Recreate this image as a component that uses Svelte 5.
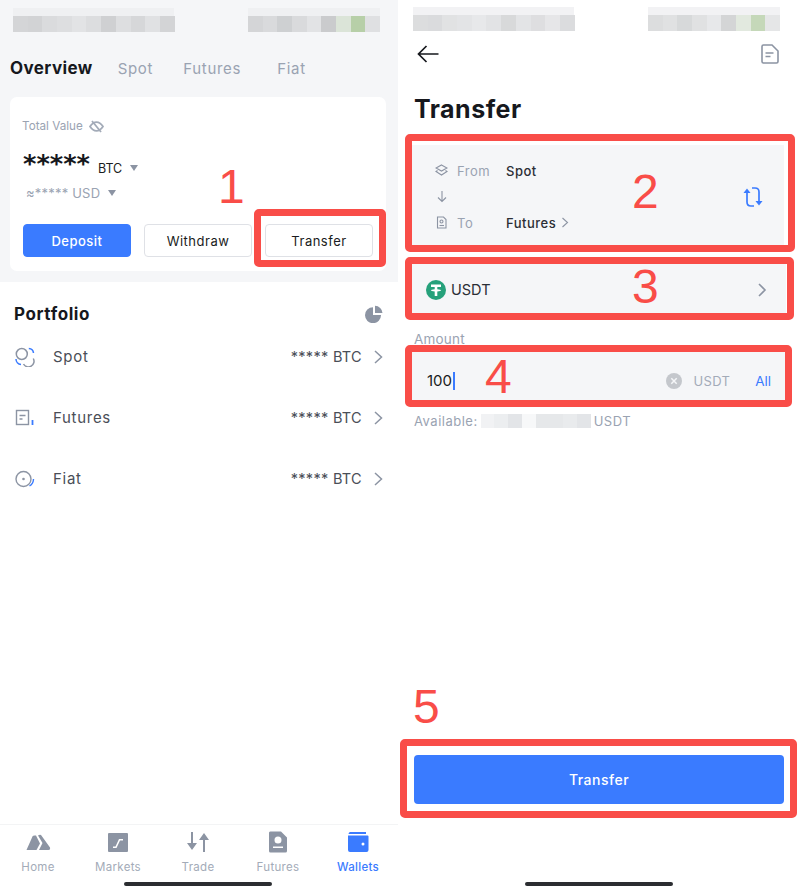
<script>
	const blurLeft = ['#d4d5d7', '#d2d3d5', '#dadbdd', '#dddee0', '#e2e3e5', '#dcdddf', '#cfd0d2', '#dddee0', '#d6d7d9', '#e0e1e3', '#d3d4d6'];
	const blurRight = ['#d4d5d7', '#d9dadc', '#ced0d2', '#d9dadc', '#e2e3e5', '#cacbcd', '#dbe4d8', '#b7cfa8', '#dfe0e2'];
	const availBlur = ['#f1f2f4', '#eceef0', '#e3e5e8', '#f7f8f9', '#e6e8ea', '#e6e8ea', '#e9ebed', '#e3e5e8'];
	const tabs = ['Home', 'Markets', 'Trade', 'Futures', 'Wallets'];
	const marks = [
		{ n: '1', x: 218, y: 163 },
		{ n: '2', x: 632, y: 168 },
		{ n: '3', x: 632, y: 263 },
		{ n: '4', x: 485, y: 353 },
		{ n: '5', x: 413, y: 683 }
	];
	const boxes = [
		{ x: 254, y: 209, w: 132, h: 58 },
		{ x: 405, y: 134, w: 390, h: 118 },
		{ x: 405, y: 257, w: 389, h: 63 },
		{ x: 405, y: 345, w: 387, h: 62 },
		{ x: 400, y: 739, w: 397, h: 79 }
	];
</script>

<div class="stage">
	<section class="phone left">
		<div class="status">
			<div class="blur">
				<div class="blur-top w161"></div>
				<div class="blur-row">{#each blurLeft as c}<i style="background:{c}"></i>{/each}</div>
			</div>
			<div class="blur">
				<div class="blur-top w132"></div>
				<div class="blur-row">{#each blurRight as c}<i style="background:{c}"></i>{/each}</div>
			</div>
		</div>

		<nav class="top-tabs">
			<span class="active">Overview</span>
			<span class="t-spot">Spot</span>
			<span class="t-fut">Futures</span>
			<span class="t-fiat">Fiat</span>
		</nav>

		<div class="card">
			<div class="total">
				Total Value
				<svg width="15" height="13" viewBox="0 0 15 13" fill="none" stroke="#a3abb8" stroke-width="1.8">
					<path d="M1 6.5C3 3.5 5 2.2 7.5 2.2S12 3.500 14 6.500C12 9.500 10 10.800 7.500 10.800S3 9.500 1 6.500Z" />
					<path d="M3 1l9 11" />
				</svg>
			</div>
			<div class="value"><b>*****</b><span>BTC</span><em class="tri dark"></em></div>
			<div class="usd">≈***** USD<em class="tri"></em></div>
			<div class="actions">
				<button class="primary">Deposit</button>
				<button>Withdraw</button>
				<button>Transfer</button>
			</div>
		</div>

		<div class="portfolio">
			<div class="pf-head">
				<h2>Portfolio</h2>
				<svg width="18" height="18" viewBox="0 0 18 18" fill="#8c94a3">
					<path d="M8 2.200A8 8 0 1 0 16 10H8Z" />
					<path d="M10 0.800A7.500 7.500 0 0 1 17.500 8H10Z" />
				</svg>
			</div>
			<div class="row">
				<svg class="ic" width="20" height="20" viewBox="0 0 20 20" fill="none" stroke-width="1.500">
					<circle cx="6.800" cy="7" r="5.500" stroke="#8c94a3" />
					<path d="M8.500 17a5.500 5.500 0 0 0 9.800-5.500" stroke="#8c94a3" />
					<path d="M13.800 1.500a5 5 0 0 1 4.700 4.500M1 12a5.500 5.500 0 0 0 5 5.500" stroke="#3a7bff" />
				</svg>
				<span class="label">Spot</span>
				<span class="amt">***** BTC</span>
				<svg class="chev" width="10" height="14" viewBox="0 0 10 14" fill="none" stroke="#8c94a3" stroke-width="1.500"><path d="M2 1l6.500 6L2 13" /></svg>
			</div>
			<div class="row">
				<svg class="ic" width="20" height="20" viewBox="0 0 20 20" fill="none" stroke-width="1.400">
					<rect x="1.500" y="2.500" width="12" height="14" stroke="#8c94a3" />
					<path d="M4.500 7.500h6M4.500 11h3" stroke="#8c94a3" />
					<path d="M17.500 12v5" stroke="#3a7bff" stroke-width="1.800" />
				</svg>
				<span class="label">Futures</span>
				<span class="amt">***** BTC</span>
				<svg class="chev" width="10" height="14" viewBox="0 0 10 14" fill="none" stroke="#8c94a3" stroke-width="1.500"><path d="M2 1l6.500 6L2 13" /></svg>
			</div>
			<div class="row">
				<svg class="ic" width="20" height="20" viewBox="0 0 20 20" fill="none" stroke-width="1.400">
					<circle cx="8.500" cy="10" r="7.500" stroke="#8c94a3" />
					<circle cx="8.500" cy="10" r="1.300" fill="#8c94a3" stroke="none" />
					<path d="M18.500 10a8 8 0 0 1-4 7" stroke="#3a7bff" />
				</svg>
				<span class="label">Fiat</span>
				<span class="amt">***** BTC</span>
				<svg class="chev" width="10" height="14" viewBox="0 0 10 14" fill="none" stroke="#8c94a3" stroke-width="1.500"><path d="M2 1l6.500 6L2 13" /></svg>
			</div>
		</div>

		<footer class="bottom-nav">
			{#each tabs as tab, i}
				<div class="nav-item" class:on={tab === 'Wallets'}>
					<svg width="26" height="22" viewBox="0 0 26 22" fill={i === 4 ? '#3a7bff' : '#8c94a3'}>
						{#if i === 0}
							<path d="M1.500 19L7.500 5.500Q8 4.500 9.500 4.500H11L15 12.500L11.500 19Z" />
							<path d="M13 4.500Q14.500 3.500 16 4L25 16.500Q25.500 19 23.500 19H14L17.500 12Z" />
						{:else if i === 1}
							<path fill-rule="evenodd" d="M4 2h18a1 1 0 0 1 1 1v17a1 1 0 0 1-1 1H4a1 1 0 0 1-1-1V3a1 1 0 0 1 1-1ZM8 15.500v1.500h3.500L15 9.500h3V8h-4l-3.500 7.500Z" />
						{:else if i === 2}
							<path d="M6 1h2v11h4l-5 7-5-7h4ZM18 21h2V9h4l-5-7-5 7h4Z" />
						{:else if i === 3}
							<path fill-rule="evenodd" d="M6 0.500h10l6 6V20a1.500 1.500 0 0 1-1.500 1.500h-15A1.500 1.500 0 0 1 4 20V2A1.500 1.500 0 0 1 6 .5ZM13 5.500a3.500 3.500 0 1 0 0 7 3.500 3.500 0 0 0 0-7ZM8 15.500v1.500h10v-1.500Z" />
						{:else}
							<path fill-rule="evenodd" d="M5 1h16v2H3.500A2.500 2.500 0 0 1 5 1ZM3 4.500h19.500a1 1 0 0 1 1 1V19a2 2 0 0 1-2 2H5a2 2 0 0 1-2-2ZM18 11.500a1.500 1.500 0 1 0 0 3 1.500 1.500 0 0 0 0-3Z" />
						{/if}
					</svg>
					<span>{tab}</span>
				</div>
			{/each}
		</footer>
		<div class="home-bar"></div>
	</section>

	<section class="phone right">
		<div class="status pale">
			<div class="blur">
				<div class="blur-top w161"></div>
				<div class="blur-row">{#each blurLeft as c}<i style="background:{c}"></i>{/each}</div>
			</div>
			<div class="blur">
				<div class="blur-top w132"></div>
				<div class="blur-row">{#each blurRight as c}<i style="background:{c}"></i>{/each}</div>
			</div>
		</div>

		<div class="appbar">
			<svg width="22" height="18" viewBox="0 0 22 18" fill="none" stroke="#16181d" stroke-width="1.700"><path d="M21.500 9H1.500M9.500 1L1.500 9l8 8" /></svg>
			<svg width="18" height="20" viewBox="0 0 18 20" fill="none" stroke="#8c94a3" stroke-width="1.600">
				<path d="M2.500 1h8.500l6 6v10.500a1.500 1.500 0 0 1-1.500 1.500h-13A1.500 1.500 0 0 1 1 17.500v-15A1.500 1.500 0 0 1 2.500 1Z" />
				<path d="M4.500 9h8M4.500 12.500h5" />
			</svg>
		</div>

		<h1>Transfer</h1>

		<div class="panel route">
			<div class="route-rows">
				<div class="route-row">
					<svg width="13" height="13" viewBox="0 0 13 13" fill="none" stroke="#8c94a3" stroke-width="1.100"><path d="M6.500 1L12 4 6.500 7 1 4ZM2.500 6.500L1 7.500 6.500 11 12 7.500 10.500 6.500" /></svg>
					<span class="k">From</span>
					<span class="v">Spot</span>
				</div>
				<div class="route-down">
					<svg width="10" height="13" viewBox="0 0 10 13" fill="none" stroke="#8c94a3" stroke-width="1.100"><path d="M5 1v10.500M1 7.500l4 4 4-4" /></svg>
				</div>
				<div class="route-row">
					<svg width="13" height="13" viewBox="0 0 13 13" fill="none" stroke="#8c94a3" stroke-width="1.100">
						<path d="M2.500 1h6L11 3.500V12H2.500Z" />
						<circle cx="6.500" cy="5.500" r="1.500" />
						<path d="M4.500 9.500h4.500" />
					</svg>
					<span class="k">To</span>
					<span class="v">Futures</span>
					<svg class="mini" width="8" height="11" viewBox="0 0 8 11" fill="none" stroke="#8c94a3" stroke-width="1.100"><path d="M1.500 1l5 4.500-5 4.500" /></svg>
				</div>
			</div>
			<svg class="swap" width="22" height="22" viewBox="0 0 22 22" fill="none" stroke="#3a7bff" stroke-width="1.700">
				<path d="M5 5v11q0 4 4 4h3" />
				<path d="M17 17V6q0-4-4-4h-3" />
				<path d="M1.500 7L5 2.500 8.500 7Z" fill="#3a7bff" stroke="none" />
				<path d="M13.500 15L17 19.500 20.500 15Z" fill="#3a7bff" stroke="none" />
			</svg>
		</div>

		<div class="panel coin">
			<svg width="20" height="20" viewBox="0 0 20 20">
				<circle cx="10" cy="10" r="10" fill="#26a17b" />
				<path d="M5 4.500h10v2.500h-3.700v2.200c2.200.1 3.900.6 3.900 1.100s-1.700 1-3.900 1.100V16H8.700v-4.600c-2.200-.1-3.900-.6-3.900-1.100s1.700-1 3.900-1.100V7H5Z" fill="#fff" />
			</svg>
			<span>USDT</span>
			<svg class="coin-chev" width="10" height="14" viewBox="0 0 10 14" fill="none" stroke="#8c94a3" stroke-width="1.600"><path d="M2 1l6 6-6 6" /></svg>
		</div>

		<div class="amount-label">Amount</div>
		<div class="panel amount">
			<span class="num">100</span><i class="caret"></i>
			<svg class="clear" width="16" height="16" viewBox="0 0 16 16">
				<circle cx="8" cy="8" r="8" fill="#c4c7cc" />
				<path d="M5.300 5.300l5.400 5.400M10.700 5.300l-5.400 5.400" stroke="#f5f6f8" stroke-width="1.500" />
			</svg>
			<span class="unit">USDT</span>
			<span class="all">All</span>
		</div>
		<div class="avail">
			Available:
			<span class="avail-blur">{#each availBlur as c}<i style="background:{c}"></i>{/each}</span>
			USDT
		</div>

		<button class="submit">Transfer</button>
		<div class="home-bar"></div>
	</section>

	{#each boxes as b}
		<div class="hl" style="left:{b.x}px;top:{b.y}px;width:{b.w}px;height:{b.h}px"></div>
	{/each}
	{#each marks as m}
		<div class="mark" style="left:{m.x}px;top:{m.y}px">{m.n}</div>
	{/each}
</div>

<style>
	:global(body) {
		margin: 0;
		background: #fff;
	}

	.stage {
		position: relative;
		display: flex;
		width: 804px;
		height: 894px;
		overflow: hidden;
		font-family: Inter, "Liberation Sans", sans-serif;
		color: #1a1c21;
	}

	.phone {
		position: relative;
		display: flex;
		flex-direction: column;
		height: 894px;
		box-sizing: border-box;
	}

	.left {
		width: 398px;
		margin-right: 2px;
		background: linear-gradient(#f5f6f8 282px, #fff 282px);
	}

	.right {
		width: 404px;
	}

	/* blurred-out status bar */
	.status {
		display: flex;
		justify-content: space-between;
		padding: 8px 18px 0 13px;
	}

	.status.pale {
		opacity: 0.8;
		padding: 7px 24px 0 13px;
	}

	.blur-top {
		height: 8px;
		background: #eff0f2;
	}

	.w161 { width: 161px; }
	.w132 { width: 132px; }

	.blur-row {
		display: flex;
	}

	.blur-row i {
		flex: 1;
		height: 16px;
		width: 14.700px;
	}

	.top-tabs {
		display: flex;
		align-items: baseline;
		height: 24px;
		margin-top: 26px;
		padding-left: 10px;
		font-size: 15px;
		letter-spacing: 0.700px;
		color: #9aa3b2;
	}

	.top-tabs .active {
		font-size: 17px;
		font-weight: 700;
		letter-spacing: 0.400px;
		color: #16181d;
	}

	.t-spot { margin-left: 25px; }
	.t-fut { margin-left: 30px; }
	.t-fiat { margin-left: 36px; }

	.card {
		box-sizing: border-box;
		width: 376px;
		height: 174px;
		margin: 15px 0 0 10px;
		padding: 22px 13px 0 13px;
		background: #fff;
		border-radius: 7px;
	}

	.total {
		display: flex;
		align-items: center;
		gap: 6px;
		height: 14px;
		margin-left: -1px;
		font-size: 11.700px;
		color: #9aa3b2;
	}

	.value {
		display: flex;
		align-items: flex-end;
		height: 35px;
		margin-top: 10px;
		font-size: 12.500px;
	}

	.value b {
		font-family: "DejaVu Sans", sans-serif;
		font-size: 25.600px;
		line-height: 30px;
		margin-right: 8px;
		color: #16181d;
	}

	.value span {
		line-height: 18px;
	}

	.tri {
		display: inline-block;
		width: 0;
		height: 0;
		margin-left: 8px;
		border: 4px solid transparent;
		border-top: 6px solid #8c94a3;
		border-bottom: 0;
	}

	.value .tri {
		margin-bottom: 7px;
	}

	.usd {
		display: flex;
		align-items: center;
		height: 16px;
		margin: 7px 0 0 3px;
		font-size: 13px;
		letter-spacing: 0.200px;
		color: #9aa3b2;
	}

	.actions {
		display: flex;
		gap: 13px;
		margin-top: 23px;
	}

	.actions button {
		box-sizing: border-box;
		width: 108px;
		height: 33px;
		padding: 0;
		background: #fff;
		border: 1px solid #dfe1e6;
		border-radius: 4px;
		font: 400 13px Inter, "Liberation Sans", sans-serif;
		letter-spacing: 0.500px;
		color: #1a1c21;
	}

	.actions .primary {
		background: #3a7bff;
		border-color: #3a7bff;
		color: #fff;
		font-weight: 500;
	}

	.portfolio {
		margin-top: 11px;
		background: #fff;
		border-radius: 12px 12px 0 0;
		padding: 0 14px;
		flex: 1;
	}

	.pf-head {
		display: flex;
		align-items: center;
		justify-content: space-between;
		height: 24px;
		margin-top: 20px;
		padding-right: 1px;
	}

	h2 {
		margin: 0;
		font-size: 17px;
		font-weight: 700;
		letter-spacing: 0.600px;
		color: #16181d;
	}

	.row {
		display: flex;
		align-items: center;
		height: 61px;
		font-size: 15px;
		color: #4a4e57;
		letter-spacing: 0.700px;
	}

	.ic {
		margin: 0 18px 0 1px;
	}

	.amt {
		margin-left: auto;
		letter-spacing: 0.300px;
		font-size: 14.500px;
	}

	.chev {
		margin: 0 0 0 11px;
	}

	.portfolio .chev {
		margin-right: 1px;
	}

	.bottom-nav {
		display: flex;
		height: 70px;
		margin: auto 0 0 0;
		background: #fff;
		border-top: 1px solid #f3f4f5;
		box-sizing: border-box;
	}

	.nav-item {
		flex: 0 0 80px;
		display: flex;
		flex-direction: column;
		align-items: center;
		padding-top: 6px;
		font-size: 11.500px;
		letter-spacing: 0.300px;
		color: #a3abb8;
	}

	.nav-item:first-child {
		margin-left: -2px;
	}

	.nav-item span {
		margin-top: 7px;
	}

	.nav-item.on {
		color: #3a7bff;
	}

	.nav-item.on span {
		font-weight: 500;
	}

	.home-bar {
		width: 148px;
		height: 4px;
		background: #2b2d31;
		border-radius: 2px;
		margin: 0 auto 8px;
	}

	.left .home-bar {
		position: absolute;
		left: 124px;
		bottom: 8px;
		margin: 0;
	}

	.appbar {
		display: flex;
		align-items: center;
		justify-content: space-between;
		height: 20px;
		margin-top: 13px;
		padding: 0 25px 0 17px;
	}

	h1 {
		margin: 0;
		padding: 28px 0 0 14px;
		font-size: 25px;
		line-height: 34px;
		font-weight: 700;
		letter-spacing: 0.500px;
		color: #16181d;
	}

	.panel {
		display: flex;
		align-items: center;
		box-sizing: border-box;
		background: #f5f6f8;
	}

	.route {
		width: 373px;
		height: 103px;
		margin: 19px 0 0 11px;
		padding: 0 20px 0 24px;
		justify-content: space-between;
	}

	.route-row {
		display: flex;
		align-items: center;
		height: 18px;
		font-size: 13px;
	}

	.route-down {
		display: flex;
		align-items: center;
		height: 34px;
		padding-left: 1px;
		margin-left: 1px;
	}

	.k {
		width: 49px;
		margin-left: 9px;
		color: #9aa3b2;
		letter-spacing: 0.500px;
	}

	.v {
		font-weight: 500;
		color: #2b2e35;
		letter-spacing: 0.500px;
	}

	.mini {
		margin-left: 5px;
	}

	.coin {
		width: 375px;
		height: 51px;
		margin: 16px 0 0 11px;
		padding: 0 19px 0 15px;
		font-size: 14.500px;
		color: #2b2e35;
	}

	.coin span {
		margin-left: 5px;
	}

	.coin-chev {
		margin-left: auto;
	}

	.amount-label {
		height: 16px;
		margin: 16px 0 0 14px;
		font-size: 13.500px;
		color: #9aa3b2;
		letter-spacing: 0.200px;
	}

	.amount {
		width: 375px;
		height: 50px;
		margin: 4px 0 0 11px;
		padding: 9px 15px 0 16px;
		font-size: 13px;
	}

	.num {
		font-size: 15px;
	}

	.caret {
		width: 1.500px;
		height: 18px;
		margin-left: 1px;
		background: #3a7bff;
	}

	.clear {
		margin-left: auto;
	}

	.unit {
		margin-left: 12px;
		color: #a3abb8;
		letter-spacing: 0.300px;
	}

	.all {
		margin-left: 25px;
		font-size: 13.500px;
		font-weight: 400;
		color: #3a7bff;
	}

	.avail {
		display: flex;
		align-items: center;
		gap: 3px;
		height: 16px;
		margin: 12px 0 0 14px;
		font-size: 13px;
		color: #9aa3b2;
		letter-spacing: 0.500px;
	}

	.avail-blur {
		display: flex;
		width: 110px;
		height: 14px;
	}

	.avail-blur i {
		flex: 1;
	}

	.submit {
		width: 370px;
		height: 49px;
		margin: auto 0 0 14px;
		padding: 0;
		background: #3a7bff;
		border: 0;
		border-radius: 4px;
		font: 500 14px Inter, "Liberation Sans", sans-serif;
		letter-spacing: 0.500px;
		color: #fff;
	}

	.right .home-bar {
		margin: 78px 0 8px 125px;
	}

	/* red annotations sit over the screenshot */
	.hl {
		position: absolute;
		box-sizing: border-box;
		border: 7px solid #f94d48;
		border-radius: 5px;
	}

	.mark {
		position: absolute;
		font-family: "Liberation Sans", Arial, sans-serif;
		font-size: 48px;
		line-height: 48px;
		color: #f94d48;
	}
</style>
